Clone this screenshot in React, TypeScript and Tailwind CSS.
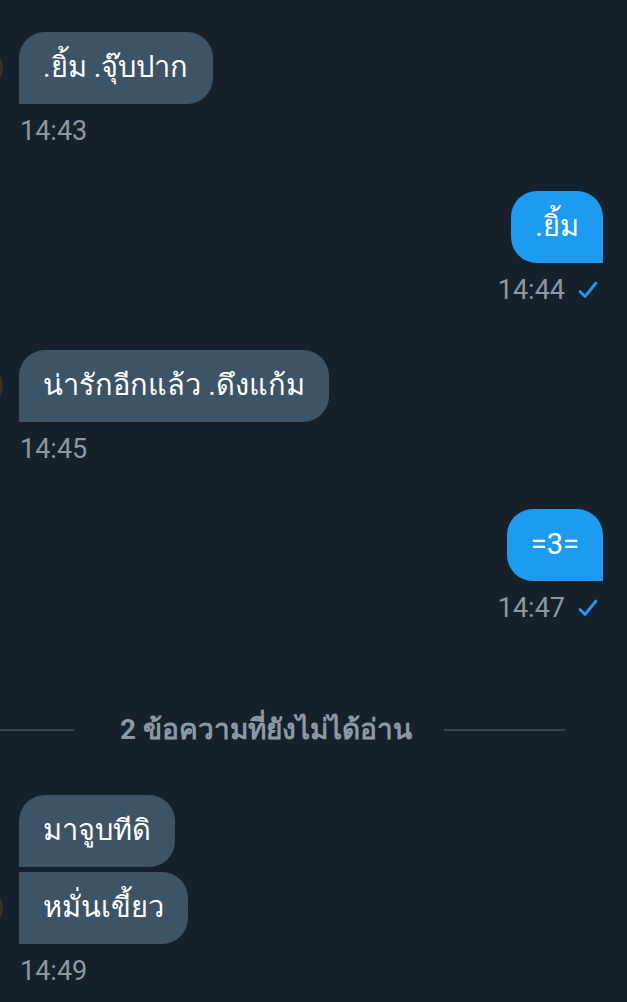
import React from 'react';

type Msg = {
  side: 'in' | 'out';
  texts: string[];
  time: string;
};

const before: Msg[] = [
  { side: 'in', texts: ['.ยิ้ม .จุ๊บปาก'], time: '14:43' },
  { side: 'out', texts: ['.ยิ้ม'], time: '14:44' },
  { side: 'in', texts: ['น่ารักอีกแล้ว .ดึงแก้ม'], time: '14:45' },
  { side: 'out', texts: ['=3='], time: '14:47' },
];

const after: Msg[] = [{ side: 'in', texts: ['มาจูบทีดิ', 'หมั่นเขี้ยว'], time: '14:49' }];

function Check() {
  return (
    <svg width="22" height="20" viewBox="0 0 22 20" fill="none">
      <path d="M3 11.5 L8 16.5 L19 3" stroke="#1d9bf0" strokeWidth="2.8" strokeLinecap="round" strokeLinejoin="round" />
    </svg>
  );
}

function Avatar() {
  return <div className="w-[40px] h-[40px] rounded-full bg-[#3a2e28] -ml-[37px] shrink-0" />;
}

function Message({ m }: { m: Msg }) {
  if (m.side === 'out') {
    return (
      <div className="flex flex-col items-end pr-[24px] mb-[45px]">
        <div className="h-[72px] px-[24px] flex items-center bg-[#1d9bf0] text-white text-[29px] rounded-[26px] rounded-br-none">
          {m.texts[0]}
        </div>
        <div className="mt-[12px] h-[30px] flex items-center gap-[12px] text-[27px] text-[#8b98a5]">
          <span>{m.time}</span>
          <span className="mr-[4px]">
            <Check />
          </span>
        </div>
      </div>
    );
  }
  return (
    <div className="flex flex-col items-start mb-[45px]">
      <div className="flex items-end gap-[16px]">
        <div className="mb-[16px]">
          <Avatar />
        </div>
        <div className="flex flex-col items-start gap-[5px]">
          {m.texts.map((t, i) => (
            <div
              key={i}
              className={
                'h-[72px] px-[24px] flex items-center bg-[#3d5366] text-white text-[29px] rounded-[26px] rounded-bl-none ' +
                (i > 0 ? 'rounded-tl-none' : '')
              }
            >
              {t}
            </div>
          ))}
        </div>
      </div>
      <div className="mt-[12px] h-[30px] flex items-center pl-[20px] text-[27px] text-[#8b98a5]">{m.time}</div>
    </div>
  );
}

export default function App() {
  return (
    <div className="w-[627px] h-[1002px] overflow-hidden bg-[#16202a] pt-[32px]" style={{ fontFamily: 'Roboto, "Noto Sans", sans-serif' }}>
      {before.map((m, i) => (
        <Message key={i} m={m} />
      ))}
      <div className="flex items-center mt-[87px] mb-[45px] h-[40px]">
        <div className="w-[74px] h-[2px] bg-[#38444d]" />
        <div className="ml-[46px] text-[28px] font-bold text-[#8b98a5]">2 ข้อความที่ยังไม่ได้อ่าน</div>
        <div className="ml-[32px] w-[121px] h-[2px] bg-[#38444d]" />
      </div>
      {after.map((m, i) => (
        <Message key={i} m={m} />
      ))}
    </div>
  );
}
